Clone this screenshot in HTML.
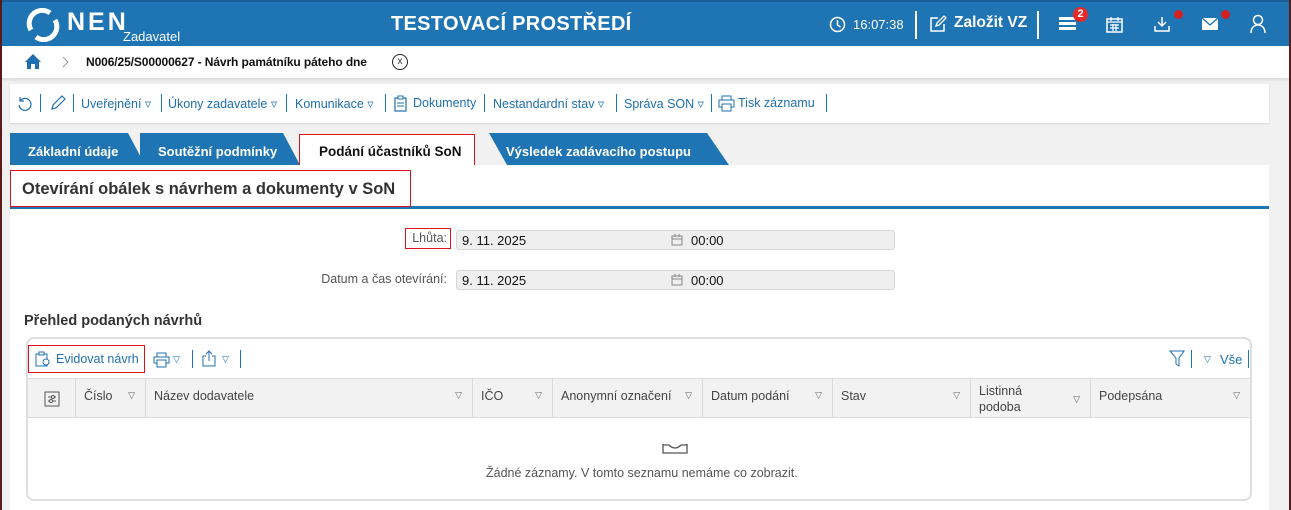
<!DOCTYPE html>
<html><head><meta charset="utf-8"><style>
*{box-sizing:border-box;margin:0;padding:0}
body{width:1291px;height:510px;overflow:hidden;background:#f1f1f1;font-family:"Liberation Sans",Arial,sans-serif;position:relative;font-size:13px;color:#333}
.abs{position:absolute}
.hdr{left:0;top:0;width:1291px;height:46px;background:#1f74b3;border-top:2px solid #1a5d9a}
.lb{left:0;top:0;width:2px;height:510px;background:#5a1a1a;z-index:9}
.rb{right:0;top:0;width:2px;height:510px;background:#5a1a1a;z-index:9}
.w{color:#fff}
.bc{left:0;top:46px;width:1291px;height:32px;background:#fff;box-shadow:0 2px 3px rgba(0,0,0,.1)}
.tb{left:10px;top:84px;width:1259px;height:39px;background:#fff;box-shadow:0 1px 2px rgba(0,0,0,.12)}
.tb span{position:absolute;top:12px;color:#1f6fae;font-size:12.5px;white-space:nowrap}
.sep{position:absolute;top:10px;width:1px;height:18px;background:#1f74b3}
.tab{top:133px;height:32px;background:#1f74b3;color:#fff;font-weight:bold;font-size:13px;padding:11px 0 0 0;text-align:left}
.panel{left:10px;top:165px;width:1259px;height:345px;background:#fff}
.inp{height:20px;background:#efefef;border:1px solid #d6d6d6;border-radius:3px;font-size:13px;color:#111;padding:2px 0 0 5px}
.lab{font-size:12.5px;color:#555;text-align:right}
.th{position:absolute;top:0;height:39px;border-right:1px solid #d9d9d9;font-size:12.5px;color:#444;padding:10px 0 0 8px}
.tri{position:absolute;right:10px;top:11px;font-size:9px;color:#666}
.red{border:1px solid #e0121e}
</style></head><body>
<div class="abs lb"></div><div class="abs rb"></div>
<div class="abs hdr">
 <svg class="abs" style="left:26px;top:6px" width="34" height="34" viewBox="0 0 34 34"><path d="M5 22 A13 13 0 0 1 24 5" stroke="#fff" stroke-width="5" fill="none"/><path d="M29 12 A13 13 0 0 1 10 29" stroke="#fff" stroke-width="5" fill="none"/></svg>
 <div class="abs w" style="left:67px;top:6px;font-size:25px;font-weight:bold;letter-spacing:3px">NEN</div>
 <div class="abs w" style="left:123px;top:27px;font-size:13px">Zadavatel</div>
 <div class="abs w" style="left:391px;top:11px;font-size:20px;font-weight:bold;letter-spacing:.3px">TESTOVACÍ PROSTŘEDÍ</div>
 <svg class="abs" style="left:829px;top:14px" width="17" height="17" viewBox="0 0 17 17"><circle cx="8.5" cy="8.5" r="7" fill="none" stroke="#fff" stroke-width="1.5"/><path d="M8.5 4v5l3 2" stroke="#fff" stroke-width="1.5" fill="none"/></svg>
 <div class="abs w" style="left:853px;top:15px;font-size:13px">16:07:38</div>
 <div class="abs" style="left:915px;top:9px;width:2px;height:28px;background:#fff"></div>
 <svg class="abs" style="left:929px;top:13px" width="18" height="18" viewBox="0 0 18 18"><path d="M9 3H2v13h13V9" stroke="#fff" stroke-width="1.5" fill="none"/><path d="M7 11l1-3 7-7 2 2-7 7z" stroke="#fff" stroke-width="1.3" fill="none"/></svg>
 <div class="abs w" style="left:954px;top:12px;font-size:15.5px;font-weight:bold">Založit VZ</div>
 <div class="abs" style="left:1037px;top:9px;width:2px;height:28px;background:#fff"></div>
 <div class="abs" style="left:1059px;top:15px;width:17px;height:3px;background:#fff;box-shadow:0 5px 0 #fff,0 10px 0 #fff"></div>
 <div class="abs" style="left:1073px;top:5px;width:15px;height:15px;border-radius:50%;background:#e52a2a;color:#fff;font-size:11px;font-weight:bold;text-align:center;line-height:15px">2</div>
 <svg class="abs" style="left:1106px;top:14px" width="17" height="17" viewBox="0 0 17 17"><rect x="1" y="3" width="15" height="13" fill="none" stroke="#fff" stroke-width="1.5"/><path d="M1 6h15M5 1v4M12 1v4M4 9h9M4 12h9M7 8v7M10 8v7" stroke="#fff" stroke-width="1.2"/></svg>
 <svg class="abs" style="left:1153px;top:13px" width="18" height="18" viewBox="0 0 18 18"><path d="M9 2v9M5 7l4 4 4-4M2 11v5h14v-5" stroke="#fff" stroke-width="1.5" fill="none"/></svg>
 <div class="abs" style="left:1174px;top:8px;width:9px;height:9px;border-radius:50%;background:#d32020"></div>
 <svg class="abs" style="left:1201px;top:15px" width="18" height="14" viewBox="0 0 18 14"><rect x="1" y="1" width="16" height="12" fill="#fff"/><path d="M1 1l8 7 8-7" stroke="#1f74b3" stroke-width="1.3" fill="none"/></svg>
 <div class="abs" style="left:1221px;top:8px;width:9px;height:9px;border-radius:50%;background:#d32020"></div>
 <svg class="abs" style="left:1249px;top:12px" width="18" height="20" viewBox="0 0 18 20"><circle cx="9" cy="6" r="4.5" fill="none" stroke="#fff" stroke-width="1.5"/><path d="M2 19c0-5 3-8 7-8s7 3 7 8" fill="none" stroke="#fff" stroke-width="1.5"/></svg>
</div>
<div class="abs bc">
 <svg class="abs" style="left:24px;top:7px" width="18" height="17" viewBox="0 0 18 17"><path d="M1 9L9 1l8 8h-2v7h-4v-5H7v5H3V9z" fill="#1f6fae"/></svg>
 <svg class="abs" style="left:62px;top:10px" width="8" height="12" viewBox="0 0 8 12"><path d="M1 1l5 5-5 5" stroke="#999" fill="none"/></svg>
 <div class="abs" style="left:86px;top:9px;font-size:12px;font-weight:bold;color:#111;letter-spacing:-.1px">N006/25/S00000627 - Návrh památníku páteho dne</div>
 <div class="abs" style="left:392px;top:8px;width:16px;height:16px;border:1px solid #222;border-radius:50%;font-size:10px;text-align:center;line-height:13px">x</div>
</div>
<div class="abs tb">
 <svg style="position:absolute;left:7px;top:12px" width="16" height="16" viewBox="0 0 16 16"><path d="M3 5A6 6 0 1 1 2 9" fill="none" stroke="#1f6fae" stroke-width="1.2"/><path d="M3 1v4h4" fill="none" stroke="#1f6fae" stroke-width="1.2"/></svg><div class="sep" style="left:30px"></div>
 <svg style="position:absolute;left:40px;top:11px" width="16" height="16" viewBox="0 0 16 16"><path d="M2 14l1-4 9-9 3 3-9 9z" fill="none" stroke="#1f6fae" stroke-width="1.2"/></svg><div class="sep" style="left:63px"></div>
 <span style="left:71px">Uveřejnění ▿</span><div class="sep" style="left:151px"></div>
 <span style="left:158px">Úkony zadavatele ▿</span><div class="sep" style="left:276px"></div>
 <span style="left:285px">Komunikace ▿</span><div class="sep" style="left:375px"></div>
 <svg style="position:absolute;left:384px;top:11px" width="13" height="17" viewBox="0 0 13 17"><rect x="1" y="3" width="11" height="13" fill="none" stroke="#1f6fae" stroke-width="1.2"/><rect x="4" y="1" width="5" height="3" fill="#fff" stroke="#1f6fae"/><path d="M3 8h7M3 11h7" stroke="#1f6fae"/></svg>
 <span style="left:403px">Dokumenty</span><div class="sep" style="left:474px"></div>
 <span style="left:483px">Nestandardní stav ▿</span><div class="sep" style="left:606px"></div>
 <span style="left:614px">Správa SON ▿</span><div class="sep" style="left:701px"></div>
 <svg style="position:absolute;left:708px;top:11px" width="17" height="17" viewBox="0 0 17 17"><rect x="4" y="1" width="9" height="4" fill="none" stroke="#1f6fae"/><rect x="1" y="5" width="15" height="7" fill="none" stroke="#1f6fae"/><rect x="4" y="9" width="9" height="7" fill="#fff" stroke="#1f6fae"/></svg>
 <span style="left:728px">Tisk záznamu</span><div class="sep" style="left:816px"></div>
</div>
<div class="abs tab" style="left:10px;width:135px;padding-left:18px;clip-path:polygon(0 0,118px 0,135px 32px,0 32px)">Základní údaje</div>
<div class="abs tab" style="left:140px;width:160px;padding-left:18px;clip-path:polygon(0 0,143px 0,160px 32px,0 32px)">Soutěžní podmínky</div>
<div class="abs tab" style="left:489px;width:240px;padding-left:17px;clip-path:polygon(0 0,218px 0,240px 32px,18px 32px,0 0)">Výsledek zadávacího postupu</div>
<div class="abs red" style="left:299px;top:134px;width:176px;height:32px;background:#fff;font-weight:bold;font-size:13.5px;color:#111;padding:9px 0 0 19px">Podání účastníků SoN</div>
<div class="abs panel"></div>
<div class="abs" style="left:10px;top:206px;width:1259px;height:3px;background:#1f74b3"></div>
<div class="abs red" style="left:10px;top:170px;width:401px;height:37px;font-size:16.5px;font-weight:bold;color:#333;padding:9px 0 0 11px">Otevírání obálek s návrhem a dokumenty v SoN</div>
<div class="abs lab red" style="left:405px;top:228px;width:46px;height:21px;padding:2px 3px 0 0">Lhůta:</div>
<div class="abs inp" style="left:456px;top:230px;width:439px">9. 11. 2025<svg style="position:absolute;left:214px;top:3px" width="12" height="12" viewBox="0 0 12 12"><rect x="1" y="2" width="10" height="9" fill="none" stroke="#888"/><path d="M1 5h10M4 0v3M8 0v3" stroke="#888"/></svg><span style="position:absolute;left:234px">00:00</span></div>
<div class="abs lab" style="left:250px;top:272px;width:197px">Datum a čas otevírání:</div>
<div class="abs inp" style="left:456px;top:270px;width:439px">9. 11. 2025<svg style="position:absolute;left:214px;top:3px" width="12" height="12" viewBox="0 0 12 12"><rect x="1" y="2" width="10" height="9" fill="none" stroke="#888"/><path d="M1 5h10M4 0v3M8 0v3" stroke="#888"/></svg><span style="position:absolute;left:234px">00:00</span></div>
<div class="abs" style="left:24px;top:313px;font-size:14.5px;font-weight:bold;color:#333">Přehled podaných návrhů</div>
<div class="abs" style="left:26px;top:337px;width:1226px;height:164px;border:2px solid #dedede;border-radius:8px;background:#fff"></div>
<div class="abs red" style="left:28px;top:345px;width:117px;height:28px"></div>
<svg class="abs" style="left:35px;top:351px" width="16" height="16" viewBox="0 0 16 16"><rect x="1" y="3" width="11" height="12" fill="none" stroke="#1f6fae"/><rect x="4" y="1" width="5" height="3" fill="#fff" stroke="#1f6fae"/><circle cx="11" cy="11" r="3" fill="#fff" stroke="#1f6fae"/></svg>
<div class="abs" style="left:56px;top:352px;color:#1f6fae;font-size:12.5px">Evidovat návrh</div>
<svg class="abs" style="left:153px;top:352px" width="17" height="16" viewBox="0 0 17 16"><rect x="4" y="1" width="9" height="4" fill="none" stroke="#1f6fae"/><rect x="1" y="5" width="15" height="6" fill="none" stroke="#1f6fae"/><rect x="4" y="8" width="9" height="7" fill="#fff" stroke="#1f6fae"/></svg>
<div class="abs" style="left:173px;top:354px;color:#1f6fae;font-size:9px">▽</div>
<div class="abs" style="left:192px;top:350px;width:1px;height:18px;background:#1f74b3"></div>
<svg class="abs" style="left:202px;top:350px" width="14" height="17" viewBox="0 0 14 17"><path d="M4 6H1v10h12V6h-3M7 11V1M4 4l3-3 3 3" fill="none" stroke="#1f6fae"/></svg>
<div class="abs" style="left:222px;top:354px;color:#1f6fae;font-size:9px">▽</div>
<div class="abs" style="left:240px;top:350px;width:1px;height:18px;background:#1f74b3"></div>
<svg class="abs" style="left:1169px;top:350px" width="16" height="17" viewBox="0 0 16 17"><path d="M1 1h14l-5 7v8l-3-2V8z" fill="none" stroke="#1f6fae"/></svg>
<div class="abs" style="left:1191px;top:350px;width:1px;height:18px;background:#1f74b3"></div>
<div class="abs" style="left:1204px;top:354px;color:#1f6fae;font-size:9px">▽</div>
<div class="abs" style="left:1220px;top:352px;color:#1f6fae;font-size:13px">Vše</div>
<div class="abs" style="left:1248px;top:350px;width:1px;height:18px;background:#1f74b3"></div>
<div class="abs" style="left:28px;top:378px;width:1222px;height:40px;background:#f2f2f2;border-top:1px solid #ddd;border-bottom:1px solid #ddd">
 <div class="th" style="left:0;width:48px"><svg width="16" height="16" viewBox="0 0 16 16" style="margin:2px 0 0 8px"><rect x="1" y="1" width="14" height="14" fill="none" stroke="#555"/><path d="M4 6h8M4 10h8" stroke="#555"/><circle cx="9" cy="6" r="1.5" fill="#fff" stroke="#555"/><circle cx="7" cy="10" r="1.5" fill="#fff" stroke="#555"/></svg></div>
 <div class="th" style="left:48px;width:70px">Číslo<span class="tri">▽</span></div>
 <div class="th" style="left:118px;width:327px">Název dodavatele<span class="tri">▽</span></div>
 <div class="th" style="left:445px;width:80px">IČO<span class="tri">▽</span></div>
 <div class="th" style="left:525px;width:150px">Anonymní označení<span class="tri">▽</span></div>
 <div class="th" style="left:675px;width:130px">Datum podání<span class="tri">▽</span></div>
 <div class="th" style="left:805px;width:138px">Stav<span class="tri">▽</span></div>
 <div class="th" style="left:943px;width:120px;padding-top:4px;line-height:16px">Listinná<br>podoba<span class="tri" style="top:12px">▽</span></div>
 <div class="th" style="left:1063px;width:159px;border-right:none">Podepsána<span class="tri">▽</span></div>
</div>
<svg class="abs" style="left:662px;top:442px" width="27" height="12" viewBox="0 0 27 12"><path d="M1 2q0 1 2 1l4 0q3 3 6 3t6-3h4q2 0 2-1v9H1z" fill="none" stroke="#555" stroke-width="1.3"/></svg>
<div class="abs" style="left:486px;top:466px;font-size:12.5px;color:#555">Žádné záznamy. V tomto seznamu nemáme co zobrazit.</div>
</body></html>
